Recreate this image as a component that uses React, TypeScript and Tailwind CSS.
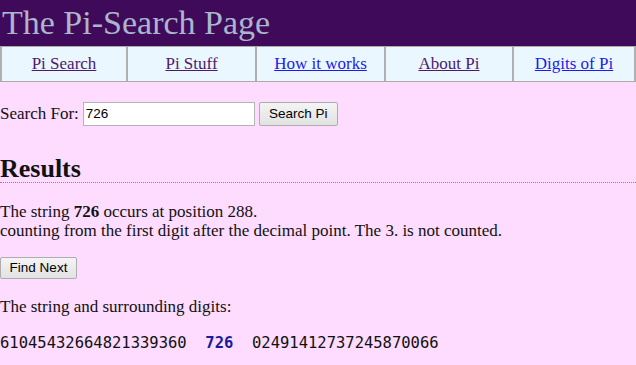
export default function App() {
  const links = [
    { label: "Pi Search", visited: true },
    { label: "Pi Stuff", visited: true },
    { label: "How it works", visited: false },
    { label: "About Pi", visited: true },
    { label: "Digits of Pi", visited: false },
  ];

  return (
    <div className="min-h-[365px] w-[636px] bg-[#fddcff] font-['Liberation_Serif',serif] text-[17px] text-[#111]">
      <header className="h-[46px] bg-[#400a5a] px-[2px]">
        <h1 className="text-[34px] leading-[45px] text-[#a9b6cc]">The Pi-Search Page</h1>
      </header>

      <nav className="grid h-[36px] grid-cols-[128px_129px_129px_128px_1fr] border-y border-[#aaaaaa] bg-[#ebf7ff]">
        {links.map((l, i) => (
          <div
            key={l.label}
            className={`flex items-center justify-center border-r-2 border-[#b0b0b0] ${i === 0 ? "border-l-2" : ""} ${i === 4 ? "border-r-0" : ""}`}
          >
            <a
              href="#"
              className={`text-[17px] underline ${l.visited ? "text-[#4b1a6e]" : "text-[#1a1aee]"}`}
            >
              {l.label}
            </a>
          </div>
        ))}
      </nav>

      <div className="mt-[19px] flex items-center gap-[4px]">
        <span>Search For:</span>
        <input
          defaultValue="726"
          className="h-[24px] w-[172px] border border-[#b5b5b5] bg-white px-[2px] font-['Liberation_Sans',sans-serif] text-[13.5px] text-black outline-none"
        />
        <button className="h-[24px] w-[79px] rounded-[2px] border border-[#adadad] bg-gradient-to-b from-[#f4f4f4] to-[#e2e2e2] font-['Liberation_Sans',sans-serif] text-[13.5px] text-black">
          Search Pi
        </button>
      </div>

      <h2 className="mt-[28px] border-b border-dotted border-[#ff5080] text-[26px] font-bold leading-[27px]">
        Results
      </h2>

      <p className="mt-[19px] leading-[19px]">
        The string <b>726</b> occurs at position 288.
        <br />
        counting from the first digit after the decimal point. The 3. is not counted.
      </p>

      <button className="mt-[17px] h-[22px] w-[77px] rounded-[2px] border border-[#adadad] bg-gradient-to-b from-[#f4f4f4] to-[#e2e2e2] font-['Liberation_Sans',sans-serif] text-[13.5px] text-black">
        Find Next
      </button>

      <p className="mt-[18px] leading-[19px]">The string and surrounding digits:</p>

      <p className="mt-[18px] whitespace-pre font-['DejaVu_Sans_Mono',monospace] text-[15.5px] leading-[19px] text-[#111]">
        61045432664821339360  <span className="font-bold text-[#1a1a9a]">726</span>  02491412737245870066
      </p>
    </div>
  );
}
